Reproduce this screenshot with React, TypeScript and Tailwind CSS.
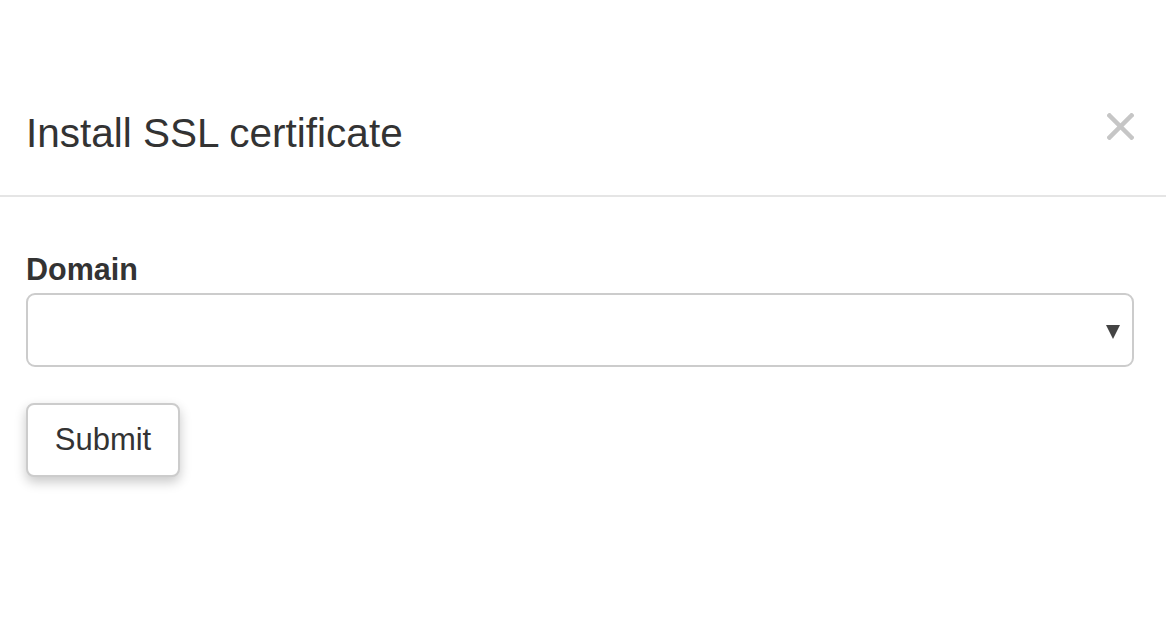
import React from 'react';

export default function App() {
  return (
    <div className="min-h-[626px] w-full bg-white pt-[72px] font-['Liberation_Sans',Arial,sans-serif] text-[#333]">
      <div className="w-full">
        {/* Header */}
        <div className="flex h-[125px] items-start justify-between border-b-2 border-[#e5e5e5] pl-[26px] pr-[32px] pt-[33px]">
          <h4 className="text-[40.5px] leading-[57px]">Install SSL certificate</h4>
          <button className="mt-[8px] flex h-[27px] w-[27px] items-center justify-center" aria-label="Close">
            <svg width="27" height="27" viewBox="0 0 27 27">
              <path d="M2.5 2.5 L24.5 24.5 M24.5 2.5 L2.5 24.5" stroke="#c6c6c6" strokeWidth="4.5" strokeLinecap="square" />
            </svg>
          </button>
        </div>

        {/* Body */}
        <div className="pl-[26px] pr-[32px] pt-[54px]">
          <label className="mb-[6px] block text-[30.5px] font-bold leading-[36px]">Domain</label>
          <div className="relative h-[74px] w-full rounded-[9px] border-2 border-[#cccccc] bg-white">
            <svg
              className="absolute right-[12px] top-[30px]"
              width="14"
              height="14"
              viewBox="0 0 14 14"
            >
              <path d="M0 0 L14 0 L7 14 Z" fill="#444" />
            </svg>
          </div>
          <button className="mt-[36px] flex h-[74px] w-[154px] items-center justify-center rounded-[8px] border-2 border-[#cccccc] bg-white text-[31px] shadow-[0_5px_12px_rgba(0,0,0,0.22)]">
            Submit
          </button>
        </div>
      </div>
    </div>
  );
}
